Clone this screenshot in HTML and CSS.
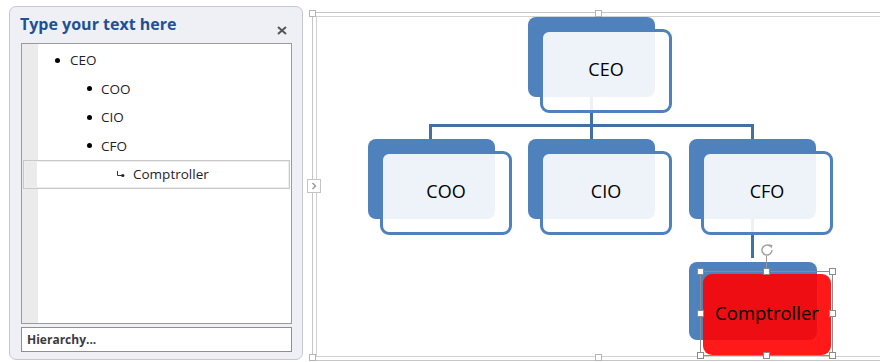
FILE: index.html
```html
<!DOCTYPE html>
<html lang="en">
<head>
  <meta charset="UTF-8">
  <title>Organization Chart</title>
  <link rel="stylesheet" href="styles.css">
</head>
<body>
  <aside class="text-pane">
    <div class="pane-head">
      <h1>Type your text here</h1>
      <svg class="close" width="10" height="9" viewBox="0 0 10 9"><path d="M1 1 L9 8 M9 1 L1 8" stroke="#555" stroke-width="2" fill="none"/></svg>
    </div>
    <div class="outline">
      <div class="row lvl1"><span class="dot"></span>CEO</div>
      <div class="row lvl2"><span class="dot"></span>COO</div>
      <div class="row lvl2"><span class="dot"></span>CIO</div>
      <div class="row lvl2"><span class="dot"></span>CFO</div>
      <div class="row current">
        <svg class="sub-arrow" width="9" height="7" viewBox="0 0 9 7"><path d="M1.5 0 V4.5 H6" stroke="#333" stroke-width="1" fill="none"/><circle cx="6.8" cy="4.5" r="1.6" fill="#222"/></svg>Comptroller
      </div>
    </div>
    <div class="hierarchy">Hierarchy...</div>
  </aside>

  <section class="canvas">
    <div class="canvas-inner"></div>

    <span class="frame-handle tl"></span>
    <span class="frame-handle tm"></span>
    <span class="frame-handle bl"></span>
    <span class="frame-handle bm"></span>
    <span class="expand"><svg width="12" height="12" viewBox="0 0 12 12"><path d="M4.5 3 L7.5 6 L4.5 9" stroke="#9b9b9b" stroke-width="1.5" fill="none"/></svg></span>

    <!-- connectors -->
    <span class="wire w-ceo"></span>
    <span class="wire w-bus"></span>
    <span class="wire w-coo"></span>
    <span class="wire w-cfo"></span>
    <span class="wire w-sub"></span>

    <div class="node n-ceo"><div class="back"></div><div class="front">CEO</div></div>
    <div class="node n-coo"><div class="back"></div><div class="front">COO</div></div>
    <div class="node n-cio"><div class="back"></div><div class="front">CIO</div></div>
    <div class="node n-cfo"><div class="back"></div><div class="front">CFO</div></div>
    <div class="node n-comp"><div class="back"></div><div class="front red">Comptroller</div></div>

    <div class="selection">
      <span class="rot-line"></span>
      <svg class="rotate" width="14" height="14" viewBox="0 0 14 14"><path d="M10.2 3.2 A5 5 0 1 0 12 7" stroke="#a3a3a3" stroke-width="1.5" fill="none"/><path d="M8.6 1.2 L12.6 2 L11.4 5.6 Z" fill="#a3a3a3"/></svg>
      <span class="sh c-tl"></span>
      <span class="sh c-tm"></span>
      <span class="sh c-tr"></span>
      <span class="sh c-ml"></span>
      <span class="sh c-mr"></span>
      <span class="sh c-bl"></span>
      <span class="sh c-bm"></span>
      <span class="sh c-br"></span>
    </div>
  </section>
</body>
</html>
```

FILE: styles.css
```css
body {
  margin: 0;
  background: #fff;
  display: flex;
  align-items: flex-start;
  height: 362px;
  overflow: hidden;
  font-family: "Open Sans", sans-serif;
}

/* text pane */
.text-pane {
  margin: 6px 0 0 9px;
  width: 294px;
  height: 354px;
  box-sizing: border-box;
  border: 1px solid #c3c9d3;
  border-radius: 7px;
  background: #eef0f6;
  display: flex;
  flex-direction: column;
  flex-shrink: 0;
}

.pane-head {
  height: 36px;
  box-sizing: border-box;
  padding: 6px 15px 0 10px;
  display: flex;
  justify-content: space-between;
  align-items: flex-start;
}

h1 {
  margin: 0;
  font-size: 16px;
  line-height: 22px;
  font-weight: 700;
  color: #1f5193;
}

.close {
  margin-top: 13px;
}

.outline {
  margin: 0 10px 0 11px;
  height: 281px;
  box-sizing: border-box;
  border: 1px solid #9a9a9a;
  background: linear-gradient(to right, #ebebeb 16px, #fff 16px);
  padding-top: 2px;
}

.row {
  height: 28.5px;
  line-height: 28.5px;
  font-size: 13.5px;
  color: #1d1d2b;
  display: flex;
  align-items: center;
  box-sizing: border-box;
}

.dot {
  width: 5px;
  height: 5px;
  border-radius: 50%;
  background: #000;
  margin-right: 10px;
}

.lvl1 {
  padding-left: 33px;
}

.lvl2 {
  padding-left: 65px;
}

.lvl2 .dot {
  margin-right: 9px;
}

.current {
  margin: 0 1px;
  border: 1px solid #c8c8c8;
  box-shadow: inset 0 0 0 1px #eeeeee;
  background: linear-gradient(to right, #ebebeb 13px, #fff 13px);
  padding-left: 92px;
}

.sub-arrow {
  margin-right: 8px;
}

.hierarchy {
  margin: 3px 10px 0 11px;
  height: 25px;
  box-sizing: border-box;
  border: 1px solid #8f8f8f;
  background: #fff;
  padding-left: 5px;
  font-size: 12px;
  font-weight: 700;
  line-height: 23px;
  color: #3b3b3b;
}

/* drawing canvas */
.canvas {
  margin: 12px 0 0 9px;
  position: relative;
  width: 600px;
  height: 349px;
  box-sizing: border-box;
  border: 1px solid #c6c6c6;
  padding: 3px;
  flex-shrink: 0;
}

.canvas-inner {
  height: 100%;
  box-sizing: border-box;
  border: 1px solid #d2d2d2;
}

.frame-handle {
  position: absolute;
  width: 7px;
  height: 7px;
  box-sizing: border-box;
  border: 1px solid #b5b5b5;
  background: #fff;
}

.tl { left: -4px; top: -3px; }
.tm { left: 282px; top: -3px; }
.bl { left: -4px; top: 341px; }
.bm { left: 282px; top: 341px; }

.expand {
  position: absolute;
  left: -6px;
  top: 166px;
  width: 14px;
  height: 14px;
  box-sizing: border-box;
  border: 1px solid #c4c4c4;
  background: #fff;
  display: flex;
  align-items: center;
  justify-content: center;
}

.wire {
  position: absolute;
  background: #416fa6;
}

.w-ceo { left: 277px; top: 44px; width: 3px; height: 82px; }
.w-bus { left: 116px; top: 111px; width: 325px; height: 3px; }
.w-coo { left: 116px; top: 111px; width: 3px; height: 15px; }
.w-cfo { left: 438px; top: 111px; width: 3px; height: 15px; }
.w-sub { left: 438px; top: 166px; width: 3px; height: 79px; }

.node {
  position: absolute;
  width: 144px;
  height: 96px;
}

.n-ceo { left: 215px; top: 4px; }
.n-coo { left: 55px; top: 126px; }
.n-cio { left: 215px; top: 126px; }
.n-cfo { left: 376px; top: 126px; }
.n-comp { left: 376px; top: 249px; }

.back {
  position: absolute;
  left: 0;
  top: 0;
  width: 127px;
  height: 80px;
  border-radius: 8px;
  background: #4f81bd;
}

.front {
  position: absolute;
  left: 12px;
  top: 12px;
  width: 132px;
  height: 84px;
  box-sizing: border-box;
  border: 3px solid #4f81bd;
  border-radius: 9px;
  background: rgba(255, 255, 255, 0.9);
  display: flex;
  align-items: center;
  justify-content: center;
  padding-bottom: 5px;
  font-size: 18px;
  color: #000;
}

.n-comp .back {
  width: 128px;
  height: 78px;
}

.front.red {
  left: 14px;
  width: 128px;
  height: 81px;
  border: none;
  background: rgba(255, 0, 0, 0.9);
  font-size: 18.5px;
}

/* selected shape */
.selection {
  position: absolute;
  left: 387px;
  top: 258px;
  width: 133px;
  height: 85px;
  box-sizing: border-box;
  border: 1px solid #8c8c8c;
}

.rot-line {
  position: absolute;
  left: 65px;
  top: -16px;
  width: 1px;
  height: 15px;
  background: #9a9a9a;
}

.rotate {
  position: absolute;
  left: 59px;
  top: -29px;
}

.sh {
  position: absolute;
  width: 7px;
  height: 7px;
  box-sizing: border-box;
  border: 1px solid #8a8a8a;
  background: #fff;
}

.c-tl { left: -4px; top: -4px; }
.c-tm { left: calc(50% - 4px); top: -4px; }
.c-tr { right: -4px; top: -4px; }
.c-ml { left: -4px; top: calc(50% - 4px); }
.c-mr { right: -4px; top: calc(50% - 4px); }
.c-bl { left: -4px; bottom: -4px; }
.c-bm { left: calc(50% - 4px); bottom: -4px; }
.c-br { right: -4px; bottom: -4px; }
```
